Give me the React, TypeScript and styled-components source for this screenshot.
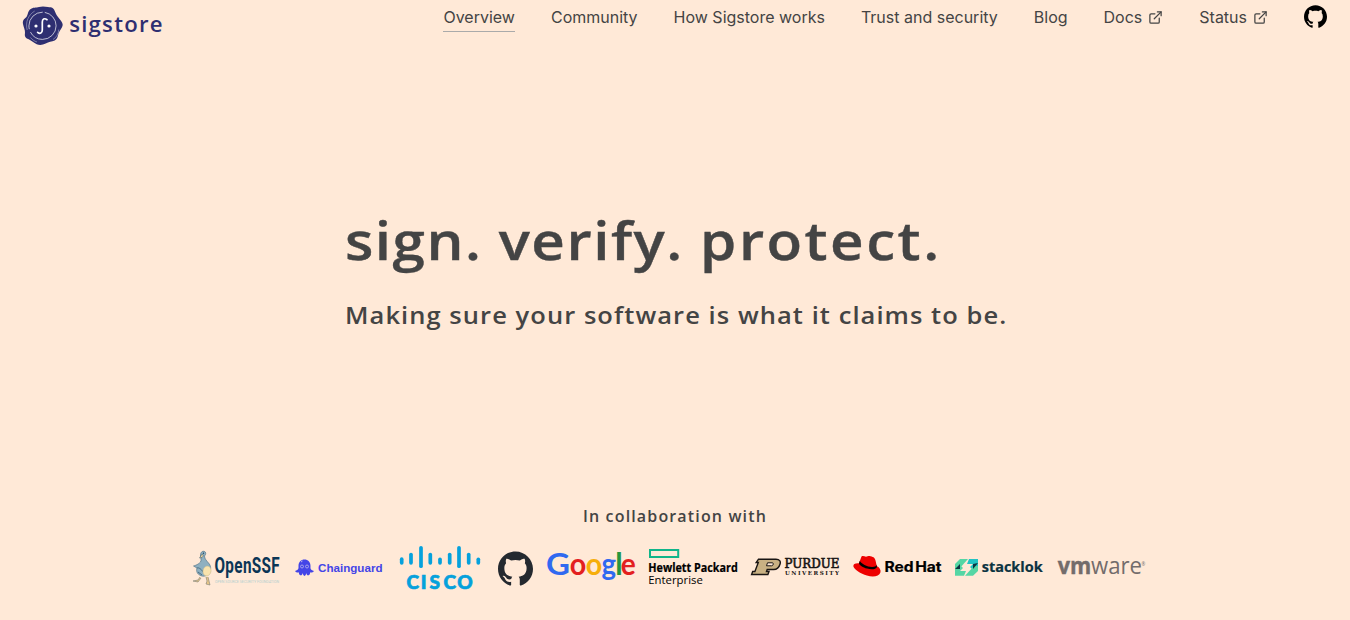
import React from 'react'
import styled, { createGlobalStyle } from 'styled-components'
import { FiExternalLink } from 'react-icons/fi'
import { SiGithub } from 'react-icons/si'

const navItems = [
	{ label: 'Overview', active: true },
	{ label: 'Community' },
	{ label: 'How Sigstore works' },
	{ label: 'Trust and security' },
	{ label: 'Blog' },
	{ label: 'Docs', external: true },
	{ label: 'Status', external: true },
]

const SigstoreLogo = () => (
	<svg width='142' height='42' viewBox='0 0 142 42'>
		<path
			fill='#2e2f71'
			d='M8 4.500C11 2 14 3 17 2c3-1 6-.6 9 0 3 .5 4.500 0 6 2.500 1.500 3 2 5 4 7.500 2 3 4.800 5 4.700 8-.2 3-3 5-4 8-1 3-1 6-4 7.500-3 1.500-6 1-9 3-3 1.500-6 1.800-9 .8-3-1.500-5-3.500-8-5C3 33 2.500 31 3 28c.3-3-1.500-6-2-9-.6-3.500 1-5 3-6.500C6 10.500 5.500 7 8 4.500Z'
		/>
		<circle cx='20.500' cy='20.800' r='13.600' fill='none' stroke='#fff' strokeWidth='.8' strokeDasharray='36 3 25 2' opacity='.85' />
		<path d='M5.200 25c-2-8 1-15 7.500-19M31 34.500c3.500-2 5.500-6 5.800-10M8.500 32.500c1.500 2 4 3.800 6.500 4.500' fill='none' stroke='#fff' strokeWidth='.6' opacity='.6' />
		<path d='M25 14.700c-2.700-2-4.700-.5-4.700 2.300v8c0 3-2.200 4.300-4.700 2.300' fill='none' stroke='#fff' strokeWidth='1.700' strokeLinecap='round' />
		<circle cx='14' cy='21' r='1.600' fill='#fff' />
		<circle cx='27' cy='21' r='1.600' fill='#fff' />
		<text x='47.200' y='26.500' textLength='94.500' lengthAdjust='spacingAndGlyphs' letterSpacing='1.200' fontFamily='Open Sans, sans-serif' fontSize='21.500' fontWeight='600' fill='#2e2f71'>sigstore</text>
	</svg>
)

const OpenSSF = () => (
	<Logo viewBox='0 0 88 48'>
		<path d='M1.500 22c2-.5 5.500-2 7-4 1.500-2.500-.5-4.500 0-7.500.3-2.500 2-3.700 3.700-3.200 2 .6 2 3.200.3 4.700 0 3 2.500 5 4 7 2.500 2.500 3 6.500.5 10-2 3-5.500 4-8.500 2.500C5 30 4 27 5 24Z' fill='#8fb0c0' stroke='#456a80' strokeWidth='.6' />
		<path d='m10 10-2.500 4 2.500-.5c1-.8 1.500-2 1-3Z' fill='#f0d49a' stroke='#31536b' strokeWidth='.5' />
		<circle cx='11.500' cy='9.200' r='.6' fill='#0b3555' />
		<path d='M5 24c2-1 5 2 7 5M6 28l4 3' fill='none' stroke='#41677d' strokeWidth='.9' />
		<ellipse cx='15' cy='27' rx='4' ry='5' fill='#f9e3ad' stroke='#c8b98c' strokeWidth='.5' transform='rotate(15 15 27)' />
		<path d='m8 33-2 3-5 1 5 1 3-4m5-1 1 4-1 3 4 1-1-4-1-4' fill='#e8c587' stroke='#7a7d75' strokeWidth='.6' />
		<text x='22.500' y='29.300' textLength='65.500' lengthAdjust='spacingAndGlyphs' letterSpacing='.5' fontFamily='Roboto, sans-serif' fontSize='22' fontWeight='700' fill='#0b3555'>OpenSSF</text>
		<text x='23' y='38.800' textLength='64' lengthAdjust='spacingAndGlyphs' fontFamily='Roboto, sans-serif' fontSize='3.500' fill='#b4cfcf'>OPEN SOURCE SECURITY FOUNDATION</text>
	</Logo>
)

const Chainguard = () => (
	<Logo viewBox='0 0 88 48'>
		<path d='M4.500 22c0-4 2.500-6.500 6-6.500s6 2.500 6 6.500c0 2.500-.5 3.500 3.500 5-1 1.500-2.500 1.800-4 1.500.3 1.500-.5 2.500-2 3-1.200-.5-1.500-1.500-1.700-2.500-.3 1.500-.8 2.500-1.800 3-1-.5-1.500-1.500-1.800-3-.2 1-.7 2-1.700 2.500-1.500-.5-2.300-1.500-2-3-1.500.3-3 0-4-1.500 4-1.500 3.500-2.500 3.500-5Z' fill='#4445e7' />
		<circle cx='8' cy='22.500' r='1.500' fill='#4445e7' stroke='#c8c3ee' strokeWidth='.7' />
		<circle cx='13' cy='22.500' r='1.500' fill='#4445e7' stroke='#c8c3ee' strokeWidth='.7' />
		<path d='m7 18 1.500-1' stroke='#c8c3ee' strokeWidth='.9' />
		<text x='24' y='28.300' textLength='64.500' lengthAdjust='spacingAndGlyphs' fontFamily='Liberation Sans, sans-serif' fontSize='11.800' fontWeight='700' fill='#4445e7'>Chainguard</text>
	</Logo>
)

const ciscoBars = [
	[5.7, 13.3, 20.7],
	[15, 8.7, 20.7],
	[25, 2, 24],
	[34.3, 8.7, 20.7],
	[44, 13.5, 20.7],
	[53.7, 8.7, 20.7],
	[63, 2, 24],
	[72.7, 8.7, 20.7],
	[82.3, 13.5, 20.7],
]

const Cisco = () => (
	<Logo viewBox='0 0 88 48'>
		{ciscoBars.map(([x, top, bottom]) => (
			<rect key={x} x={x - 1.85} y={top} width='3.700' height={bottom - top} rx='1.850' fill='#05a1dc' />
		))}
		<text x='10.500 24.800 33.500 47.500 61.200' y='44.700' fontFamily='Lato, sans-serif' fontSize='19' fontWeight='900' fill='#05a1dc' stroke='#05a1dc' strokeWidth='.7'>CISCO</text>
	</Logo>
)

const Google = () => (
	<Logo viewBox='0 0 88 48' fontFamily='Lato, sans-serif' fontSize='30' fontWeight='700'>
		<text y='31' x='-1' textLength='24' lengthAdjust='spacingAndGlyphs' fill='#3069f0'>G</text>
		<text y='31' x='22.700' textLength='16.500' lengthAdjust='spacingAndGlyphs' fill='#e3201f'>o</text>
		<text y='31' x='38.700' textLength='16.500' lengthAdjust='spacingAndGlyphs' fill='#f6ae0b'>o</text>
		<text y='31' x='54.500' textLength='14.500' lengthAdjust='spacingAndGlyphs' fill='#3069f0'>g</text>
		<text y='31' x='68.300' fill='#26963f'>l</text>
		<text y='31' x='73.800' textLength='15' lengthAdjust='spacingAndGlyphs' fill='#e3201f'>e</text>
	</Logo>
)

const HewlettPackard = () => (
	<Logo viewBox='0 0 88 48' fontFamily='Open Sans, sans-serif' fontSize='11.500'>
		<rect x='1' y='6' width='28.200' height='7' fill='none' stroke='#10b58a' strokeWidth='2' />
		<text x='-.7' y='28' textLength='89.500' lengthAdjust='spacingAndGlyphs' fontWeight='700' stroke='#000' strokeWidth='.2'>Hewlett Packard</text>
		<text x='-.7' y='40' textLength='54.500' lengthAdjust='spacingAndGlyphs'>Enterprise</text>
	</Logo>
)

const Purdue = () => (
	<Logo viewBox='0 0 88 48' fontFamily='DejaVu Serif, serif' fontWeight='700' fill='#191513'>
		<path d='M7.500 15.200H25c3.500 0 5 2 4 5-1 3.300-3 5.300-6.300 5.300h-6.500l-.7 2h2.500l-1.100 3H.6l1.100-3h2.200l3.400-9H5.200Z' fill='#c9b183' stroke='#191513' strokeWidth='1.400' />
		<path d='M16.500 18.800h5c1.300 0 1 3-.9 3h-5.100Z' fill='#ffe9d7' stroke='#191513' strokeWidth='1' />
		<text x='33.500' y='24' textLength='55' lengthAdjust='spacingAndGlyphs' fontSize='12.400' fontWeight='400' stroke='#191513' strokeWidth='.6'>PURDUE</text>
		<text x='34' y='30.700' textLength='54' fontSize='5.600'>UNIVERSITY</text>
	</Logo>
)

const RedHat = () => (
	<Logo viewBox='0 0 88 48'>
		<path d='M8.500 12.500c1.500-1.200 3 .2 4.500.2s2.500-1 4.500-.4c3.500.8 4.500 1.700 5.200 5l1 4.700c3 1.500 4.500 4 3.700 6.500-1.200 4-7.500 5-13.500 3C7.500 29.500 1.500 26 .4 22.500 0 20 2 19 6 19.200Z' fill='#e00' />
		<path d='m6 19.200.8-2.400c2 4 10.500 7.800 16 5.500l.6-1.800.6 2.500c-1 2.500-5.500 3-10 1.600-4-1.200-7.800-3.500-8-5.400Z' fill='#000' />
		<text x='31.500' y='28' textLength='57' lengthAdjust='spacingAndGlyphs' wordSpacing='-2' fontFamily='Inter, sans-serif' fontSize='14.500' fontWeight='700' stroke='#000' strokeWidth='.2'>Red Hat</text>
	</Logo>
)

const Stacklok = () => (
	<Logo viewBox='0 0 88 48'>
		<path d='M5 15h8L4 25H0v-5Z' fill='#55d6a4' />
		<path d='M14 15h9v7l-6 3-2-2 3-3h-6Z' fill='#22c3c3' />
		<path d='M18 31.700h-8L19 22h4v5Z' fill='#55d6a4' />
		<path d='M9 31.700H0V25l6-3 2 2-3 3h6Z' fill='#55d6a4' />
		<path d='m0 25 5-5v5Zm18-5 5-1-5 6Z' fill='#0b3340' />
		<text x='26.700' y='28' textLength='61' lengthAdjust='spacingAndGlyphs' fontFamily='Open Sans, sans-serif' fontSize='14.500' fontWeight='700' fill='#0b3340' stroke='#0b3340' strokeWidth='.2'>stacklok</text>
	</Logo>
)

const VMware = () => (
	<Logo viewBox='0 0 88 48' fill='#736c6b'>
		<text x='.8' y='30.200' textLength='33.500' lengthAdjust='spacingAndGlyphs' fontFamily='Open Sans, sans-serif' fontSize='23' fontWeight='700' stroke='#736c6b' strokeWidth='.4'>vm</text>
		<text x='34' y='30.200' textLength='51' lengthAdjust='spacingAndGlyphs' fontFamily='Open Sans, sans-serif' fontSize='23'>ware</text>
		<text x='84.500' y='21.500' fontFamily='Open Sans, sans-serif' fontSize='4.500'>®</text>
	</Logo>
)

const Header = () => (
	<HeaderBar>
		<SigstoreLogo />
		<Nav>
			{navItems.map(({ label, active, external }) => (
				<NavLink key={label} $active={active}>
					{label}
					{external && <FiExternalLink size={15} />}
				</NavLink>
			))}
			<GithubLink>
				<SiGithub size={23} />
			</GithubLink>
		</Nav>
	</HeaderBar>
)

const App: React.FC = () => {
	return (
		<Page>
			<GlobalStyle />
			<Header />
			<Hero>
				<Title>
					<Word $spacing={1.35}>sign.</Word> <Word $spacing={1.4}>verify.</Word> <Word $spacing={2.25}>protect.</Word>
				</Title>
				<Subtitle>Making sure your software is what it claims to be.</Subtitle>
			</Hero>
			<Partners>
				<PartnersTitle>In collaboration with</PartnersTitle>
				<LogoRow>
					<OpenSSF />
					<Chainguard />
					<Cisco />
					<SiGithub size={35} color='#24292f' />
					<Google />
					<HewlettPackard />
					<Purdue />
					<RedHat />
					<Stacklok />
					<VMware />
				</LogoRow>
			</Partners>
		</Page>
	)
}

const GlobalStyle = createGlobalStyle`
	body {
		margin: 0;
		background: #ffe9d7;
		overflow: hidden;
	}
	* {
		box-sizing: border-box;
	}
`

const Page = styled.div`
	display: flex;
	flex-direction: column;
	height: 620px;
	background: #ffe9d7;
	color: #444;
	font-family: 'Open Sans', sans-serif;
`

const HeaderBar = styled.header`
	display: flex;
	justify-content: space-between;
	height: 200px;
	padding: 5px 23px 0 22px;
`

const Nav = styled.nav`
	display: flex;
	align-items: flex-start;
	gap: 36px;
	font-family: Inter, sans-serif;
`

const NavLink = styled.a<{ $active?: boolean }>`
	display: flex;
	align-items: center;
	gap: 6px;
	height: 27px;
	padding-bottom: 2px;
	border-bottom: 1px solid ${({ $active }) => ($active ? '#aaa' : 'transparent')};
	font-size: 16px;
	line-height: 24px;
	white-space: nowrap;
`

const GithubLink = styled.a`
	display: flex;
	color: #000;
`

const Hero = styled.main`
	width: 661px;
	height: 300px;
	margin: 0 auto;
	white-space: nowrap;
`

const Title = styled.h1`
	margin: 0;
	font-size: 53px;
	font-weight: 600;
	line-height: 80px;
	letter-spacing: 1px;
	transform: scaleX(1.1);
	transform-origin: left;
	-webkit-text-stroke: 0.4px #444;
`

const Word = styled.span<{ $spacing: number }>`
	letter-spacing: ${({ $spacing }) => $spacing}px;
`

const Subtitle = styled.h2`
	margin: 15px 0 0;
	font-size: 24px;
	font-weight: 600;
	line-height: 40px;
	letter-spacing: 1px;
	transform: scaleX(1.062);
	transform-origin: left;
`

const Partners = styled.section`
	display: flex;
	flex-direction: column;
	align-items: center;
	padding-top: 4px;
`

const PartnersTitle = styled.h3`
	margin: 0;
	font-size: 16px;
	font-weight: 600;
	line-height: 24px;
	letter-spacing: 1.15px;
`

const LogoRow = styled.div`
	display: flex;
	align-items: center;
	gap: 14px;
	height: 48px;
	margin-top: 16px;
	padding-right: 13px;
`

const Logo = styled.svg`
	width: 88px;
	height: 48px;
	overflow: visible;
`

export default App
